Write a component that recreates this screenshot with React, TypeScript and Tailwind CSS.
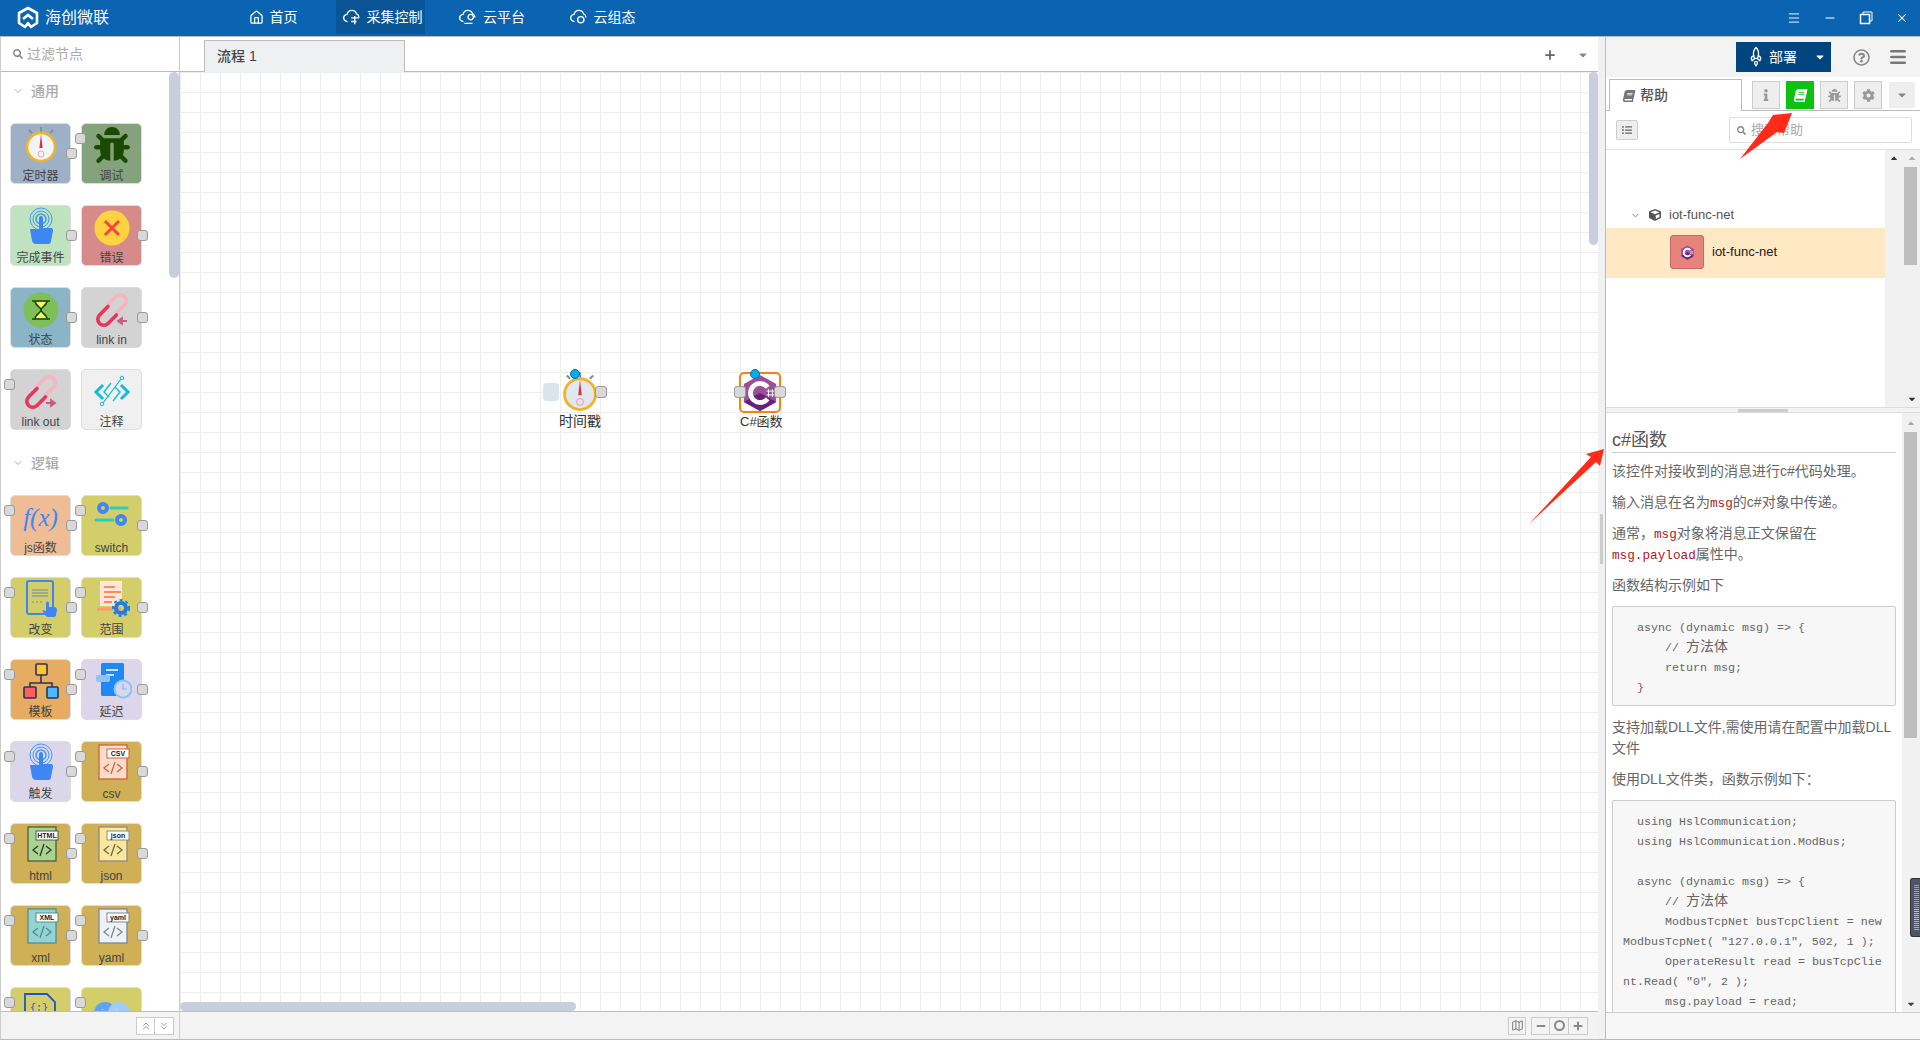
import type { ReactNode } from "react"
import { ChevronDown, ChevronsDown, ChevronsUp, Home, Map, Menu, Minus, Plus, Rocket, X } from "lucide-react"
import { FaBook, FaBug, FaCaretDown, FaCaretUp, FaCog, FaCube, FaInfo, FaListUl, FaRegQuestionCircle, FaSearch } from "react-icons/fa"

function Stopwatch({ face = "#f2f5f8", size = 40 }: { face?: string; size?: number }) {
  return (
    <svg viewBox="0 0 40 40" width={size} height={size}>
      <path d="M20 2v5M8 5l3 3M32 5l-3 3" stroke="#8a8f96" strokeWidth="2" />
      <circle cx="20" cy="22" r="14" fill={face} stroke="#f0b429" strokeWidth="2.6" />
      <path d="M20 9l1.6 14h-3.2z" fill="#d9333f" />
      <circle cx="20" cy="29" r="3" fill="none" stroke="#f4a6a6" />
    </svg>
  )
}

function Touch() {
  return (
    <svg viewBox="0 0 40 40" className="h-[40px] w-[40px]" fill="none">
      <circle cx="20" cy="12" r="11" stroke="#3f9af5" />
      <circle cx="20" cy="12" r="8" stroke="#3f9af5" />
      <circle cx="20" cy="12" r="5" stroke="#3f9af5" strokeWidth="1.5" />
      <path d="M18 11a2 2 0 014 0v10h8c2 0 2 2 2 3l-2 10c0 2-1 3-3 3H15c-2 0-3-1-4-3l-2-12h9z" fill="#3f86f5" />
    </svg>
  )
}

function ErrorIcon() {
  return (
    <svg viewBox="0 0 40 40" className="h-[40px] w-[40px]">
      <circle cx="20" cy="21" r="17.5" fill="#ffd23f" />
      <path d="M13 14l14 14M27 14L13 28" stroke="#f5453c" strokeWidth="3" />
    </svg>
  )
}

function Hourglass() {
  return (
    <svg viewBox="0 0 40 40" className="h-[40px] w-[40px]">
      <circle cx="20" cy="21" r="17.5" fill="#7fbf58" />
      <path d="M15 13h10c0 4-5 5-5 8s5 4 5 8H15c0-4 5-5 5-8s-5-4-5-8z" fill="#f8f46a" />
      <path d="M11 12h18M11 30h18M14 12c0 5 6 6 6 9s-6 4-6 9M26 12c0 5-6 6-6 9s6 4 6 9" stroke="#1a4a10" strokeWidth="1.6" fill="none" />
    </svg>
  )
}

function LinkIcon({ dir }: { dir: "in" | "out" }) {
  return (
    <svg viewBox="0 0 40 40" className="h-[40px] w-[40px]" fill="none" strokeWidth="3.6" strokeLinecap="round">
      {/* two open U links, drawn along their own axis then turned 45deg */}
      <path d="M-6 -6H6A6 6 0 016 6H-6" stroke="#f8b4c0" transform="translate(24 16) rotate(-45)" />
      <path d="M6 -6H-6A6 6 0 00-6 6H6" stroke="#e8355a" transform="translate(16 26) rotate(-45)" />
      {dir === "in" ? (
        <path d="M35 32h-8M26 32l4-3v6z" stroke="#c95c85" strokeWidth="1.8" fill="#c95c85" strokeLinecap="butt" />
      ) : (
        <path d="M25 32h8M34 32l-4-3v6z" stroke="#c95c85" strokeWidth="1.8" fill="#c95c85" strokeLinecap="butt" />
      )}
    </svg>
  )
}

function CommentIcon() {
  return (
    <svg viewBox="0 0 40 40" className="h-[40px] w-[40px]" fill="none" stroke="#10bcd8">
      <path d="M11 14l-7 7 7 7M29 14l7 7-7 7" strokeWidth="3" />
      <path d="M19 12l-7 9 5 5M21 30l7-9-5-5" strokeWidth="1.4" />
      <path d="M11 32L29 8" strokeWidth="1.2" />
      <circle cx="30" cy="7" r="1.8" fill="#f0f0f0" />
      <circle cx="10" cy="33" r="1.8" fill="#f0f0f0" />
    </svg>
  )
}

function SwitchIcon() {
  return (
    <svg viewBox="0 0 40 40" className="h-[40px] w-[40px]" fill="none">
      <circle cx="11" cy="11" r="4" stroke="#3f86f5" strokeWidth="4" />
      <path d="M19 11h16M4 23h17" stroke="#2bcfb8" strokeWidth="3" strokeLinecap="round" />
      <circle cx="29" cy="23" r="4" stroke="#3f86f5" strokeWidth="4" />
    </svg>
  )
}

function TabletIcon() {
  return (
    <svg viewBox="0 0 40 40" className="h-[40px] w-[40px]" fill="none">
      <rect x="6" y="2" width="26" height="33" rx="2" stroke="#3f86f5" strokeWidth="2" />
      <path d="M11 11h16M11 14h16M11 17h16" stroke="#6b87a8" />
      <path d="M11 23h12" stroke="#6b87a8" strokeDasharray="2 2" />
      <path d="M25 24a1.5 1.5 0 013 0v4h5c2 0 3 1 3 3l-1 5c0 1-1 2-2 2h-6c-1 0-2-1-3-2l-3-5 4 1z" fill="#3f86f5" />
    </svg>
  )
}

function ScopeIcon() {
  return (
    <svg viewBox="0 0 40 40" className="h-[40px] w-[40px]" fill="none">
      <path d="M8 2h22v25H8z" fill="#fde6da" />
      <path d="M5 30h24" stroke="#ff9a6b" strokeWidth="3" />
      <path d="M12 8h11M12 13h17M12 18h11M12 23h8" stroke="#ff8a5c" strokeWidth="1.8" />
      <circle cx="29" cy="29" r="5" stroke="#1e7fe0" strokeWidth="4" />
      <circle cx="29" cy="29" r="8" stroke="#1e7fe0" strokeWidth="2" strokeDasharray="3 3" />
    </svg>
  )
}

function OrgIcon() {
  return (
    <svg viewBox="0 0 40 40" className="h-[40px] w-[40px]" stroke="#2b3558" strokeWidth="1.6">
      <path d="M20 14v8M9 28v-6h22v6" fill="none" />
      <rect x="15" y="3" width="11" height="11" rx="1" fill="#ffc629" />
      <rect x="3" y="26" width="12" height="11" rx="1" fill="#ff5f63" />
      <rect x="26" y="26" width="11" height="11" rx="1" fill="#4db8ff" />
    </svg>
  )
}

function DelayIcon() {
  return (
    <svg viewBox="0 0 40 40" className="h-[40px] w-[40px]" fill="none">
      <rect x="9" y="2" width="23" height="33" rx="1.5" fill="#1e88f5" />
      <path d="M14 9h12M14 14h8" stroke="#fff" strokeWidth="1.4" />
      <rect x="4" y="14" width="14" height="7" rx="2" fill="#8cc4f7" />
      <circle cx="31" cy="28" r="8.5" fill="#dcd6ea" stroke="#8cc4f7" strokeWidth="2" />
      <path d="M31 23v5h4" stroke="#8cc4f7" strokeWidth="1.6" />
    </svg>
  )
}

function DocIcon({ fill, stroke, tag, code }: { fill: string; stroke: string; tag: string; code: string }) {
  return (
    <svg viewBox="0 0 40 40" className="h-[40px] w-[40px]" fill="none">
      <rect x="7" y="2" width="28" height="34" fill={fill} stroke={stroke} strokeWidth="1.3" />
      <rect x="15" y="6" width="22" height="9" fill="#fff" stroke={stroke} />
      <text x="26" y="13" textAnchor="middle" fontSize="7" fontWeight="700" fill="#222" fontFamily="Liberation Sans">{tag}</text>
      <path d="M17 21l-5 4 5 4M25 21l5 4-5 4M23 19l-4 12" stroke={code} strokeWidth="1.3" />
    </svg>
  )
}

function BracesIcon() {
  return (
    <svg viewBox="0 0 40 40" className="h-[40px] w-[40px]" fill="none">
      <path d="M4 5h22l8 8v26H4z" stroke="#1f55c7" strokeWidth="1.8" />
      <text x="18" y="22" textAnchor="middle" fontSize="10" fill="#1f55c7" fontFamily="Liberation Mono">{"{;}"}</text>
    </svg>
  )
}

function JoinIcon() {
  return (
    <svg viewBox="0 0 40 40" className="h-[40px] w-[40px]">
      <circle cx="13" cy="24" r="11" fill="#5ea3f5" />
      <circle cx="27" cy="24" r="11" fill="#a2cbf7" />
      <text x="13" y="27" textAnchor="middle" fontSize="9" fill="#fff" fontFamily="Liberation Sans">io</text>
      <text x="27" y="27" textAnchor="middle" fontSize="9" fill="#fff" fontFamily="Liberation Sans">in</text>
    </svg>
  )
}

function FxIcon() {
  return (
    <div className="flex h-[40px] items-center font-['Liberation_Serif',serif] text-[25px] italic leading-none text-[#3f86f5]">f(x)</div>
  )
}

function CSharp({ size = 34 }: { size?: number }) {
  return (
    <svg viewBox="0 0 40 40" width={size} height={size}>
      <path d="M20 1l17 9.5v19L20 39 3 29.5v-19z" fill="#9b4f96" />
      <path d="M20 20L3 29.5 20 39l17-9.5z" fill="#68217a" />
      <path d="M28 14a10 10 0 100 12" fill="none" stroke="#fff" strokeWidth="5" />
      <path d="M29 16v8M33 16v8M27 18h8M27 22h8" stroke="#fff" strokeWidth="1" />
    </svg>
  )
}

type PaletteNode = { label: string; bg: string; icon: ReactNode; left?: boolean; right?: boolean }

const green = "#d3ce69"
const tan = "#d0b057"

const commonNodes: PaletteNode[] = [
  { label: "定时器", bg: "#9eb0c6", icon: <Stopwatch />, right: true },
  { label: "调试", bg: "#84a37c", icon: <div className="flex h-[40px] items-center"><FaBug size={36} color="#1a4a00" /></div>, left: true },
  { label: "完成事件", bg: "#bfe3bf", icon: <Touch />, right: true },
  { label: "错误", bg: "#d68a8a", icon: <ErrorIcon />, right: true },
  { label: "状态", bg: "#8bb4c7", icon: <Hourglass />, right: true },
  { label: "link in", bg: "#d3d3d3", icon: <LinkIcon dir="in" />, right: true },
  { label: "link out", bg: "#d3d3d3", icon: <LinkIcon dir="out" />, left: true },
  { label: "注释", bg: "#f0f0f0", icon: <CommentIcon /> },
]

const logicNodes: PaletteNode[] = [
  { label: "js函数", bg: "#eebd95", icon: <FxIcon />, left: true, right: true },
  { label: "switch", bg: green, icon: <SwitchIcon />, left: true, right: true },
  { label: "改变", bg: green, icon: <TabletIcon />, left: true, right: true },
  { label: "范围", bg: green, icon: <ScopeIcon />, left: true, right: true },
  { label: "模板", bg: "#e6ad62", icon: <OrgIcon />, left: true, right: true },
  { label: "延迟", bg: "#dcd6ea", icon: <DelayIcon />, left: true, right: true },
  { label: "触发", bg: "#dcd6ea", icon: <Touch />, left: true, right: true },
  { label: "csv", bg: tan, icon: <DocIcon fill="#fddccc" stroke="#d2603a" tag="CSV" code="#d2603a" />, left: true, right: true },
  { label: "html", bg: tan, icon: <DocIcon fill="#a9d38e" stroke="#4c5a48" tag="HTML" code="#2c3a2c" />, left: true, right: true },
  { label: "json", bg: tan, icon: <DocIcon fill="#fde79a" stroke="#8a8a8a" tag="json" code="#6b6b50" />, left: true, right: true },
  { label: "xml", bg: tan, icon: <DocIcon fill="#96d2d2" stroke="#4f8f95" tag="XML" code="#3f8f95" />, left: true, right: true },
  { label: "yaml", bg: tan, icon: <DocIcon fill="#eef2f8" stroke="#7d8794" tag="yaml" code="#7d8794" />, left: true, right: true },
  { label: "", bg: green, icon: <BracesIcon />, left: true, right: true },
  { label: "", bg: green, icon: <JoinIcon />, left: true, right: true },
]

function Port({ className }: { className: string }) {
  return <span className={`absolute h-[11px] w-[11px] rounded-[3px] border border-[#999] bg-[#d9d9d9] ${className}`} />
}

function NodeCard({ node }: { node: PaletteNode }) {
  return (
    <div className="relative flex h-[61px] w-[61px] flex-col items-center rounded-[5px] border border-[#ddd]" style={{ backgroundColor: node.bg }}>
      {node.left && <Port className="left-[-7px] top-[9px]" />}
      {node.right && <Port className="right-[-7px] top-[24px]" />}
      <div className="mt-[1px] flex h-[40px] w-[40px] items-center justify-center overflow-visible">{node.icon}</div>
      <div className="mt-[4px] whitespace-nowrap text-[12px] leading-[14px] text-[#444]">{node.label}</div>
    </div>
  )
}

function Section({ title, nodes }: { title: string; nodes: PaletteNode[] }) {
  return (
    <div>
      <div className="flex h-[30px] items-center pl-[11px] text-[#aaa]">
        <ChevronDown size={12} />
        <span className="ml-[7px] text-[14px] font-medium">{title}</span>
      </div>
      <div className="mt-[17px] grid w-[132px] grid-cols-[61px_61px] gap-x-[10px] gap-y-[21px] pl-[9px]">
        {nodes.map((n, i) => (
          <NodeCard key={i} node={n} />
        ))}
      </div>
    </div>
  )
}

function Palette() {
  return (
    <div className="flex w-[180px] shrink-0 flex-col border-x border-[#ccc]">
      <div className="flex h-[35px] shrink-0 items-center gap-[4px] border-b border-[#bbb] pl-[12px] text-[14px] text-[#aaa]">
        <FaSearch size={10} color="#888" />
        <span>过滤节点</span>
      </div>
      <div className="relative min-h-0 flex-1 overflow-hidden pt-[4px]">
        <span className="absolute right-0 top-0 h-[206px] w-[10px] rounded-[5px] bg-[#c8cedb]" />
        <Section title="通用" nodes={commonNodes} />
        <div className="h-[18px]" />
        <Section title="逻辑" nodes={logicNodes} />
      </div>
      <div className="flex h-[28px] shrink-0 items-center justify-end border-t border-[#bbb] bg-[#f3f3f3] pr-[5px]">
        <span className="flex h-[18px] w-[19px] items-center justify-center border border-[#ccc] bg-white text-[#999]"><ChevronsUp size={12} /></span>
        <span className="flex h-[18px] w-[19px] items-center justify-center border border-l-0 border-[#ccc] bg-white text-[#999]"><ChevronsDown size={12} /></span>
      </div>
    </div>
  )
}

function Workspace() {
  return (
    <div className="flex min-w-0 flex-1 flex-col">
      <div className="flex h-[35px] shrink-0 items-end border-b border-[#bbb] pl-[24px]">
        <div className="mb-[-1px] flex h-[32px] w-[201px] items-center border border-b-0 border-[#bbb] bg-[#eff0f2] pl-[12px] text-[14px] font-medium text-[#444]">流程 1</div>
        <div className="ml-auto flex h-[33px] items-center gap-[20px] pr-[9px] text-[#666]">
          <Plus size={14} strokeWidth={3} />
          <FaCaretDown size={12} color="#888" />
        </div>
      </div>
      <div className="relative min-h-0 flex-1 overflow-hidden bg-white bg-[linear-gradient(to_right,#eee_1px,transparent_1px),linear-gradient(to_bottom,#eee_1px,transparent_1px)] bg-[size:20px_20px]">
        {/* flow nodes */}
        <span className="absolute left-[363px] top-[311px] h-[18px] w-[16px] rounded-[4px] bg-[#dbe3ec]" />
        <div className="absolute left-[378px] top-[298px]"><Stopwatch face="#e1e7ee" size={44} /></div>
        <span className="absolute left-[415px] top-[314px] h-[12px] w-[12px] rounded-[3px] border border-[#999] bg-[#d9d9d9]" />
        <span className="absolute left-[390px] top-[297px] h-[10px] w-[10px] rounded-full border border-[#0a6fa8] bg-[#00aeef]" />
        <div className="absolute left-[379px] top-[341px] text-[14px] leading-[16px] text-[#333]">时间戳</div>

        <div className="absolute left-[559px] top-[300px] flex h-[41px] w-[42px] items-center justify-center rounded-[5px] border-2 border-[#ff7f0e] bg-white">
          <CSharp size={38} />
        </div>
        <span className="absolute left-[554px] top-[314px] h-[12px] w-[12px] rounded-[3px] border border-[#999] bg-[#d9d9d9]" />
        <span className="absolute left-[594px] top-[314px] h-[12px] w-[12px] rounded-[3px] border border-[#999] bg-[#d9d9d9]" />
        <span className="absolute left-[570px] top-[297px] h-[10px] w-[10px] rounded-full border border-[#0a6fa8] bg-[#00aeef]" />
        <div className="absolute left-[560px] top-[342px] text-[13px] leading-[16px] text-[#333]">C#函数</div>

        {/* scrollbars */}
        <span className="absolute right-0 top-0 h-[173px] w-[9px] rounded-[5px] bg-[#c8cedb]" />
        <span className="absolute bottom-0 left-0 h-[9px] w-[396px] rounded-[5px] bg-[#c8cedb]" />
      </div>
      <div className="flex h-[28px] shrink-0 items-center justify-end border-t border-[#bbb] bg-[#f3f3f3] pr-[10px] text-[#888]">
        <span className="flex h-[18px] w-[18px] items-center justify-center border border-[#ccc]"><Map size={13} /></span>
        <span className="ml-[5px] flex h-[18px] w-[19px] items-center justify-center border border-[#ccc]"><Minus size={12} strokeWidth={4} /></span>
        <span className="flex h-[18px] w-[19px] items-center justify-center border border-l-0 border-[#ccc]"><span className="h-[11px] w-[11px] rounded-full border-2 border-[#888]" /></span>
        <span className="flex h-[18px] w-[19px] items-center justify-center border border-l-0 border-[#ccc]"><Plus size={12} strokeWidth={4} /></span>
      </div>
    </div>
  )
}

function Msg({ children }: { children: ReactNode }) {
  return <code className="font-['Liberation_Mono',monospace] text-[12.7px] leading-[14px] text-[#ad1625]">{children}</code>
}

function Cn({ children }: { children: ReactNode }) {
  return <span className="font-['Noto_Sans_CJK_SC',sans-serif] text-[14px] leading-[14px]">{children}</span>
}

function CodeBox({ children }: { children: ReactNode }) {
  return (
    <pre className="mb-[11px] whitespace-pre-wrap break-all rounded-[2px] border border-[#ccc] bg-[#f7f7f7] px-[10px] pb-[7px] pt-[11px] font-['Liberation_Mono',monospace] text-[11.67px] leading-[20px] text-[#666]">
      {children}
    </pre>
  )
}

const trayBars = [
  ...Array(12).fill("#9a9fae"),
  ...Array(6).fill("#d3ce69"),
  ...Array(5).fill("#6fd0c0"),
] as string[]

function HelpBody() {
  return (
    <div className="relative min-h-0 flex-1 overflow-hidden">
      <div className="h-[600px] w-[290px] overflow-hidden pl-[6px] text-[14px] leading-[21px] text-[#666]">
        <h1 className="mt-[16px] h-[24px] border-b border-[#ccc] text-[18px] font-normal leading-[22px] text-[#555]">c#函数</h1>
        <p className="mb-[10px] mt-[8px]">该控件对接收到的消息进行c#代码处理。</p>
        <p className="mb-[10px]">输入消息在名为<Msg>msg</Msg>的c#对象中传递。</p>
        <p className="mb-[10px]">通常，<Msg>msg</Msg>对象将消息正文保留在<br /><Msg>msg.payload</Msg>属性中。</p>
        <p className="mb-[10px]">函数结构示例如下</p>
        <CodeBox>{"  async (dynamic msg) => {\n      // "}<Cn>方法体</Cn>{"\n      return msg;\n  }"}</CodeBox>
        <p className="mb-[10px]">支持加载DLL文件,需使用请在配置中加载DLL文件</p>
        <p className="mb-[10px]">使用DLL文件类，函数示例如下：</p>
        <CodeBox>{"  using HslCommunication;\n  using HslCommunication.ModBus;\n\n  async (dynamic msg) => {\n      // "}<Cn>方法体</Cn>{"\n      ModbusTcpNet busTcpClient = new ModbusTcpNet( \"127.0.0.1\", 502, 1 );\n      OperateResult read = busTcpClient.Read( \"0\", 2 );\n      msg.payload = read;\n      return msg;\n  }"}</CodeBox>
      </div>
      {/* scrollbar */}
      <div className="absolute bottom-0 right-0 top-0 w-[18px] bg-[#f1f1f1]">
        <FaCaretUp size={10} color="#aaa" className="absolute left-[4px] top-[5px]" />
        <span className="absolute left-[2px] top-[19px] h-[306px] w-[13px] bg-[#bdbdbd]" />
        <FaCaretDown size={10} color="#444" className="absolute bottom-[3px] left-[4px]" />
      </div>
      {/* tray handle */}
      <div className="absolute right-0 top-[465px] flex h-[59px] w-[10px] flex-col gap-[1px] rounded-l-[3px] border border-r-0 border-[#333] bg-[#4f5566] py-[6px] pl-[3px]">
        {trayBars.map((c, i) => (
          <span key={i} className="h-[1px] w-[5px]" style={{ backgroundColor: c }} />
        ))}
      </div>
    </div>
  )
}

function TabButton({ children, active }: { children: ReactNode; active?: boolean }) {
  return (
    <span className={`flex h-[28px] w-[28px] items-center justify-center ${active ? "bg-[#0ec10e] text-white" : "border border-[#ccc] bg-[#eee] text-[#999]"}`}>
      {children}
    </span>
  )
}

function RightPanel() {
  return (
    <div className="flex w-[315px] shrink-0 flex-col border-l border-[#bbb] bg-white">
      <div className="flex h-[40px] shrink-0 items-center bg-[#f3f3f3] pl-[130px]">
        <div className="flex h-[30px] w-[95px] items-center bg-[#00457f] pl-[12px] text-[14px] text-white">
          <Rocket size={16} className="-rotate-45" />
          <span className="ml-[5px]">部署</span>
          <FaCaretDown size={12} className="ml-[17px]" />
        </div>
        <FaRegQuestionCircle size={17} color="#888" className="ml-[22px]" />
        <Menu size={20} strokeWidth={3} color="#777" className="ml-[18px]" />
      </div>
      <div className="flex h-[34px] shrink-0 items-end border-b border-[#bbb] bg-white pl-[3px]">
        <div className="mb-[-1px] flex h-[32px] w-[133px] items-center gap-[5px] border border-b-0 border-[#bbb] bg-white pl-[13px] text-[14px] font-medium text-[#555]">
          <FaBook size={12} color="#777" className="-skew-x-12" />
          帮助
        </div>
        <div className="mb-[1px] ml-[10px] flex items-center gap-[6px]">
          <TabButton><FaInfo size={12} /></TabButton>
          <TabButton active><FaBook size={13} className="-skew-x-12" /></TabButton>
          <TabButton><FaBug size={13} /></TabButton>
          <TabButton><FaCog size={13} /></TabButton>
          <span className="ml-[1px] flex h-[26px] w-[26px] items-center justify-center bg-[#eee] text-[#888]"><FaCaretDown size={12} /></span>
        </div>
      </div>
      <div className="flex h-[39px] shrink-0 items-center border-b border-[#ddd] pl-[10px] pr-[8px]">
        <span className="flex h-[20px] w-[22px] items-center justify-center rounded-[2px] border border-[#ccc] bg-[#eee] text-[#666]"><FaListUl size={10} /></span>
        <div className="ml-auto flex h-[26px] w-[183px] items-center gap-[5px] rounded-[2px] border border-[#ddd] pl-[7px] text-[13px] text-[#aaa]">
          <FaSearch size={9} color="#888" />
          搜索帮助
        </div>
      </div>
      <div className="flex h-[257px] shrink-0">
        <div className="min-w-0 flex-1">
          <div className="h-[52px]" />
          <div className="mt-[3px] flex h-[20px] items-center pl-[24px] text-[13px] text-[#555]">
            <ChevronDown size={11} color="#777" />
            <FaCube size={12} color="#555" className="ml-[8px]" />
            <span className="ml-[8px]">iot-func-net</span>
          </div>
          <div className="mt-[3px] flex h-[50px] items-center bg-[#ffe8c4] pb-[2px] pl-[64px] text-[13px] text-[#222]">
            <span className="flex h-[34px] w-[34px] items-center justify-center rounded-[3px] border border-[#c66] bg-[#e6837a]"><CSharp size={15} /></span>
            <span className="ml-[8px]">iot-func-net</span>
          </div>
        </div>
        <div className="relative w-[35px] shrink-0 bg-[#f1f1f1]">
          <FaCaretUp size={10} color="#333" className="absolute left-[4px] top-[3px]" />
          <FaCaretUp size={10} color="#aaa" className="absolute left-[22px] top-[3px]" />
          <span className="absolute left-[19px] top-[17px] h-[98px] w-[13px] bg-[#bdbdbd]" />
          <FaCaretDown size={10} color="#333" className="absolute bottom-[3px] left-[22px]" />
        </div>
      </div>
      <div className="flex h-[6px] shrink-0 items-center justify-center border-y border-[#ddd] bg-[#f3f3f3]">
        <span className="h-[3px] w-[50px] bg-[#ccc]" />
      </div>
      <HelpBody />
      <div className="h-[27px] shrink-0 border-t border-[#ccc] bg-[#f7f7f7]" />
    </div>
  )
}

function CloudNav({ inner }: { inner: ReactNode }) {
  return (
    <svg viewBox="0 0 20 20" className="h-[18px] w-[18px]" fill="none" stroke="#fff" strokeWidth="1.5">
      <path d="M5 15a4 4 0 01-.5-8 5.5 5.5 0 0110.6-.5 4 4 0 012.5 4" />
      {inner}
    </svg>
  )
}

const navItems: { label: string; icon: ReactNode; active?: boolean; width: string }[] = [
  { label: "首页", icon: <Home size={15} />, width: "w-[126px]" },
  { label: "采集控制", icon: <CloudNav inner={<path d="M9 11h9M9 15h6M13 9v9" />} />, active: true, width: "w-[89px] pl-[4px]" },
  { label: "云平台", icon: <CloudNav inner={<path d="M6 17h9M10 10a3 3 0 110 .1z" />} />, width: "w-[134px]" },
  { label: "云组态", icon: <CloudNav inner={<circle cx="12" cy="13" r="3.5" />} />, width: "w-[87px]" },
]

export default function App() {
  return (
    <div className="relative flex h-[1040px] w-[1920px] flex-col overflow-hidden bg-white font-['Liberation_Sans','Noto_Sans_CJK_SC',sans-serif]">
      <header className="flex h-[36px] shrink-0 items-start bg-[#0b64b1] text-white">
        <div className="flex h-[36px] w-[210px] items-center gap-[5px] pl-[16px] text-[16px]">
          <svg viewBox="0 0 24 24" className="h-[24px] w-[24px]" fill="none" stroke="#fff" strokeWidth="2.6">
            <path d="M12 2l9 5v10l-6 4-3-4-3 4-6-4V7z" strokeLinejoin="round" />
            <path d="M7 13l5-4 5 4" />
          </svg>
          海创微联
        </div>
        {navItems.map((n) => (
          <div key={n.label} className={`flex h-[34px] items-center justify-center gap-[6px] text-[14px] ${n.width} ${n.active ? "bg-[#0a5596]" : ""}`}>
            {n.icon}
            {n.label}
          </div>
        ))}
        <div className="ml-auto flex h-[36px] items-center gap-[22px] pr-[11px]">
          <Menu size={14} strokeWidth={1.6} />
          <Minus size={14} strokeWidth={1.8} />
          <svg viewBox="0 0 14 14" className="h-[14px] w-[14px]" fill="none" stroke="#fff" strokeWidth="1.5">
            <rect x="1.5" y="3.5" width="9" height="9" />
            <path d="M4 3V1h9v9h-2" strokeWidth="1" />
          </svg>
          <X size={14} strokeWidth={1.8} />
        </div>
      </header>
      <main className="flex min-h-0 flex-1 border-y border-[#bbb]">
        <Palette />
        <Workspace />
        <div className="relative w-[7px] shrink-0 bg-[#f0f1f3]">
          <span className="absolute left-[2px] top-[477px] h-[50px] w-[3px] bg-[#ccc]" />
        </div>
        <RightPanel />
      </main>
      {/* red callout arrows */}
      <svg className="pointer-events-none absolute inset-0 h-[1040px] w-[1920px]" viewBox="0 0 1920 1040">
        <polygon points="1740,159 1768,123 1773,115 1792,113 1784,133 1777,132" fill="#ff2a1a" />
        <polygon points="1529,524 1591,457 1586,454 1604,449 1600,466 1596,462" fill="#ff2a1a" />
      </svg>
    </div>
  )
}
